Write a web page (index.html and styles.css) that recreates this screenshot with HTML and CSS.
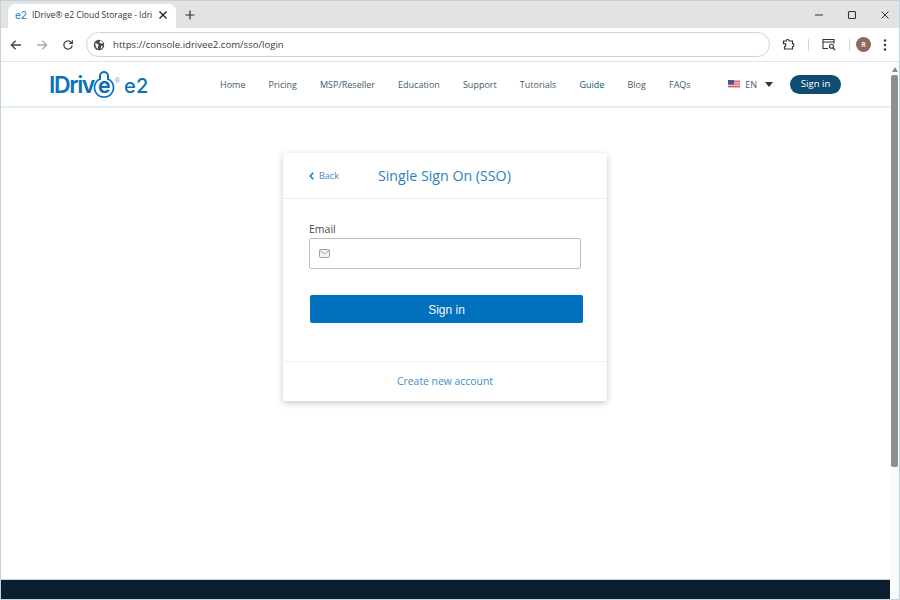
FILE: index.html
```html
<!DOCTYPE html>
<html lang="en">
<head>
<meta charset="utf-8">
<title>IDrive e2 Cloud Storage</title>
<link rel="stylesheet" href="styles.css">
</head>
<body>
<div class="window">
  <div class="tabbar">
    <div class="tab">
      <span class="tab-logo">e2</span>
      <span class="tab-title">IDrive® e2 Cloud Storage - Idri</span>
      <svg class="tab-close" width="10" height="10" viewBox="0 0 10 10"><path d="M1.5 1.5l7 7M8.5 1.5l-7 7" stroke="#222" stroke-width="1.4" fill="none"/></svg>
    </div>
    <svg class="newtab" width="10" height="10" viewBox="0 0 10 10"><path d="M5 .5v9M.5 5h9" stroke="#333" stroke-width="1.2" fill="none"/></svg>
    <div class="winctl">
      <svg width="10" height="10" viewBox="0 0 10 10"><path d="M1 5h8" stroke="#333" stroke-width="1" fill="none"/></svg>
      <svg width="10" height="10" viewBox="0 0 10 10"><rect x="1.5" y="1.5" width="7" height="7" rx="1" stroke="#333" stroke-width="1.1" fill="none"/></svg>
      <svg width="10" height="10" viewBox="0 0 10 10"><path d="M1.5 1.5l7 7M8.5 1.5l-7 7" stroke="#333" stroke-width="1" fill="none"/></svg>
    </div>
  </div>
  <div class="toolbar">
    <svg class="navicon" width="12" height="12" viewBox="0 0 12 12"><path d="M11 6H1.6M5.6 1.8L1.4 6l4.2 4.2" stroke="#444" stroke-width="1.3" fill="none"/></svg>
    <svg class="navicon" width="12" height="12" viewBox="0 0 12 12"><path d="M1 6h9.4M6.4 1.8L10.6 6l-4.2 4.2" stroke="#a9a9a9" stroke-width="1.3" fill="none"/></svg>
    <svg class="navicon" width="12" height="12" viewBox="0 0 12 12"><path d="M10.2 6.4a4.2 4.2 0 1 1-1.1-3.3L10.4 4.4M10.4 1.2v3.2H7.2" stroke="#444" stroke-width="1.25" fill="none"/></svg>
    <div class="omnibox">
      <svg width="12" height="12" viewBox="0 0 12 12"><circle cx="6" cy="6" r="5.2" fill="#444"/><path d="M2 4.2l2.6.6 1.2 1.6-1 1.2.5 2.6L3 8.200zM7 1.600l-.6 1.800 1.400 1.200 2.700-.4L9 2.200zM8 7l1.800-.4-.8 2.500-1.300.8z" fill="#fff"/></svg>
      <span class="url">https://console.idrivee2.com/sso/login</span>
    </div>
    <div class="tools">
      <svg width="14" height="14" viewBox="0 0 14 14"><path d="M2 4h2.600a1.500 1.500 0 0 1 3 0H11v2.600a1.400 1.400 0 0 1 0 2.900V12H3V9.500a1.400 1.400 0 0 0 0-2.900H2z" stroke="#333" stroke-width="1.200" fill="none" transform="translate(.5 -1)"/></svg>
      <span class="sep"></span>
      <svg width="14" height="13" viewBox="0 0 14 13"><path d="M6 10.500H1V1.500h11v4M1 4h11" stroke="#333" stroke-width="1.100" fill="none"/><circle cx="9.500" cy="8.300" r="2" stroke="#333" stroke-width="1.100" fill="none"/><path d="M11 10l2 2" stroke="#333" stroke-width="1.200"/></svg>
      <span class="sep"></span>
      <span class="avatar">R</span>
      <svg class="dots" width="4" height="12" viewBox="0 0 4 12"><circle cx="2" cy="1.500" r="1.200" fill="#333"/><circle cx="2" cy="6" r="1.200" fill="#333"/><circle cx="2" cy="10.500" r="1.200" fill="#333"/></svg>
    </div>
  </div>
  <div class="viewport">
    <div class="page">
      <header class="site-header">
        <a class="logo">
          <span class="logo-word">IDriv</span>
          <span class="logo-e">e<svg class="logo-lock" width="24" height="28" viewBox="0 0 24 28"><path d="M8 10V6a4 4 0 0 1 8 0v4" stroke="#0b72ba" stroke-width="2" fill="none"/><path d="M8 8.900A9.500 9.500 0 1 0 16 8.900" stroke="#0b72ba" stroke-width="1.700" fill="none"/></svg></span>
          <span class="logo-reg">®</span>
          <span class="logo-e2">e2</span>
        </a>
        <nav class="nav">
          <a>Home</a><a>Pricing</a><a>MSP/Reseller</a><a>Education</a><a>Support</a><a>Tutorials</a><a class="guide">Guide</a><a>Blog</a><a>FAQs</a>
        </nav>
        <div class="lang">
          <svg width="12" height="8" viewBox="0 0 12 8"><rect width="12" height="8" fill="#f2b8bd"/><path d="M0 1.500h12M0 4h12M0 6.500h12" stroke="#d9606b" stroke-width="1"/><rect width="6" height="4.500" fill="#3f5c95"/></svg>
          <span>EN</span>
          <span class="caret"></span>
        </div>
        <a class="pill">Sign in</a>
      </header>
      <main class="main">
        <section class="card">
          <div class="card-head">
            <a class="back"><svg width="5" height="8" viewBox="0 0 5 8"><path d="M4.200.8L1.200 4l3 3.200" stroke="#0e72b8" stroke-width="1.400" fill="none"/></svg>Back</a>
            <h1 class="card-title">Single Sign On (SSO)</h1>
          </div>
          <form class="card-body">
            <label class="field-label">Email</label>
            <div class="input">
              <svg width="11" height="9" viewBox="0 0 11 9"><rect x=".5" y=".5" width="10" height="8" rx="1" stroke="#9aa0a6" fill="#f2f3f4"/><path d="M1 1.500l4.500 3.500L10 1.500" stroke="#9aa0a6" fill="none"/></svg>
            </div>
            <button class="submit" type="button">Sign in</button>
          </form>
          <div class="card-foot"><a>Create new account</a></div>
        </section>
      </main>
      <footer class="site-footer"></footer>
    </div>
    <div class="scrollbar">
      <span class="arrow"></span>
      <span class="thumb"></span>
    </div>
  </div>
</div>
</body>
</html>
```
FILE: styles.css
```css
* { box-sizing: border-box; }
html, body { margin: 0; height: 100%; overflow: hidden; }
body { font-family: "Open Sans", "Liberation Sans", sans-serif; background: #fff; }
a { text-decoration: none; }

.window {
  width: 900px;
  height: 600px;
  display: flex;
  flex-direction: column;
  border: 1px solid #bfd3dc;
  border-bottom-color: #c3d5dd;
}

.tabbar {
  height: 27px;
  background: #e3e3e3;
  display: flex;
  align-items: flex-end;
  padding-left: 7px;
  flex: none;
}
.tab {
  width: 168px;
  height: 24px;
  background: #fff;
  border-radius: 7px 7px 0 0;
  display: flex;
  align-items: center;
  padding: 0 0 2px 7px;
}
.tab-logo { font: 400 10px/1 "Inter", sans-serif; color: #1a78bd; width: 17px; }
.tab-title { font: 400 8.500px/1 "Open Sans", sans-serif; color: #333; width: 125px; white-space: nowrap; }
.tab-close { margin-left: 1px; }
.newtab { margin: 0 0 8px 9px; }
.winctl { margin-left: auto; display: flex; gap: 23px; padding: 0 9px 8px 0; }

.toolbar {
  height: 34px;
  flex: none;
  background: #fff;
  border-bottom: 1px solid #e3e3e3;
  display: flex;
  align-items: center;
  padding: 0 0 0 9px;
}
.navicon { margin-right: 14px; }
.navicon:nth-of-type(3) { margin-right: 12px; }
.omnibox {
  width: 684px;
  height: 25px;
  border: 1px solid #d2d2d2;
  border-radius: 13px;
  display: flex;
  align-items: center;
  gap: 8px;
  padding-left: 6px;
}
.url { font-size: 9.600px; color: #3c3c3c; }
.tools { display: flex; align-items: center; margin-left: 11px; }
.sep { width: 1px; height: 12px; background: #d6d6d6; margin: 0 13px; }
.avatar {
  width: 15px; height: 15px; border-radius: 50%; margin-left: -7px;
  background: #8d6a5c; color: #f2e8e3;
  font: 700 7px/15px "Open Sans", sans-serif; text-align: center;
}
.dots { margin-left: 12px; }

.viewport { flex: 1; display: flex; min-height: 0; }
.page { flex: 1; display: flex; flex-direction: column; min-width: 0; }

.site-header {
  height: 46px;
  flex: none;
  border-bottom: 2px solid #e4eff5;
  display: flex;
  align-items: center;
  padding-left: 49px;
}
.logo { display: flex; align-items: baseline; color: #0b72ba; width: 170px; height: 30px; padding-top: 5px; }
.logo-word { font: 600 23px/1 "Inter", sans-serif; letter-spacing: -1.400px; margin-left: -1px; }
.logo-e { position: relative; font: 700 21px/1 "Inter", sans-serif; width: 19px; margin-left: 1px; text-align: center; }
.logo-lock { position: absolute; left: -2.500px; top: -5px; }
.logo-reg { font: 400 7px/1 "Liberation Sans", sans-serif; color: #6aa4cf; position: relative; top: -10px; margin: 0 4px 0 1px; }
.logo-e2 { font: 500 20px/1 "Inter", sans-serif; letter-spacing: .3px; }

.nav { display: flex; gap: 23.100px; font-size: 9px; color: #44596a; margin-right: 37.500px; }
.nav a { white-space: nowrap; }
.nav .guide { color: #0c5a80; }

.lang { display: flex; align-items: center; font-size: 9px; color: #44596a; gap: 5px; width: 62px; }
.caret { width: 0; height: 0; margin-left: 3px; border: 4.500px solid transparent; border-top: 5px solid #333; border-bottom: 0; }
.pill {
  width: 51px; height: 19px; border-radius: 10px;
  background: #0f4c71; color: #fff;
  font-size: 9.600px; line-height: 17px; text-align: center;
}

.main { flex: 1; display: flex; justify-content: center; align-items: flex-start; padding: 45px 1px 0 0; min-height: 0; }
.card {
  width: 324px;
  height: 248px;
  background: #fff;
  border-radius: 3px;
  box-shadow: 0 2px 7px rgba(0, 0, 0, .22);
  display: flex;
  flex-direction: column;
}
.card-head {
  height: 46px;
  flex: none;
  border-bottom: 1px solid #eeeeee;
  display: flex;
  align-items: center;
  padding: 0 0 0 26px;
}
.back { display: flex; align-items: center; gap: 5px; font-size: 9px; color: #3f8cc4; width: 69px; }
.card-title { margin: 0; font-size: 14.200px; font-weight: 400; color: #2a81c2; white-space: nowrap; }
.card-body { flex: 1; padding: 23px 25px 0 26px; display: flex; flex-direction: column; }
.field-label { font-size: 10.500px; line-height: 14px; color: #4a4a4a; margin-bottom: 2px; }
.input {
  width: 272px; height: 31px;
  border: 1px solid #bdbdbd; border-radius: 2px;
  display: flex; align-items: center; padding-left: 9px;
}
.submit {
  width: 273px; height: 28px; margin: 26px 0 0 1px; padding: 1px 0 0;
  background: #0170bd; border: 0; border-radius: 2px;
  color: #f2f8fc; font: 400 12px/1 "Liberation Sans", sans-serif;
}
.card-foot {
  height: 40px; flex: none;
  border-top: 1px solid #f0f0f0;
  display: flex; align-items: center; justify-content: center;
  font-size: 10.400px; color: #3f8cc4; padding-bottom: 2px;
}

.site-footer { height: 20px; flex: none; background: #0a1e2f; border-top: 1px solid #ccd4d8; }

.scrollbar { width: 9px; flex: none; background: #fbfbfb; display: flex; flex-direction: column; align-items: center; padding-top: 5px; }
.arrow { width: 0; height: 0; border: 3.500px solid transparent; border-bottom: 5px solid #8a8a8a; border-top: 0; }
.thumb { width: 7px; height: 392px; margin-top: 3px; background: #8f8f8f; border-radius: 2px; }
```
